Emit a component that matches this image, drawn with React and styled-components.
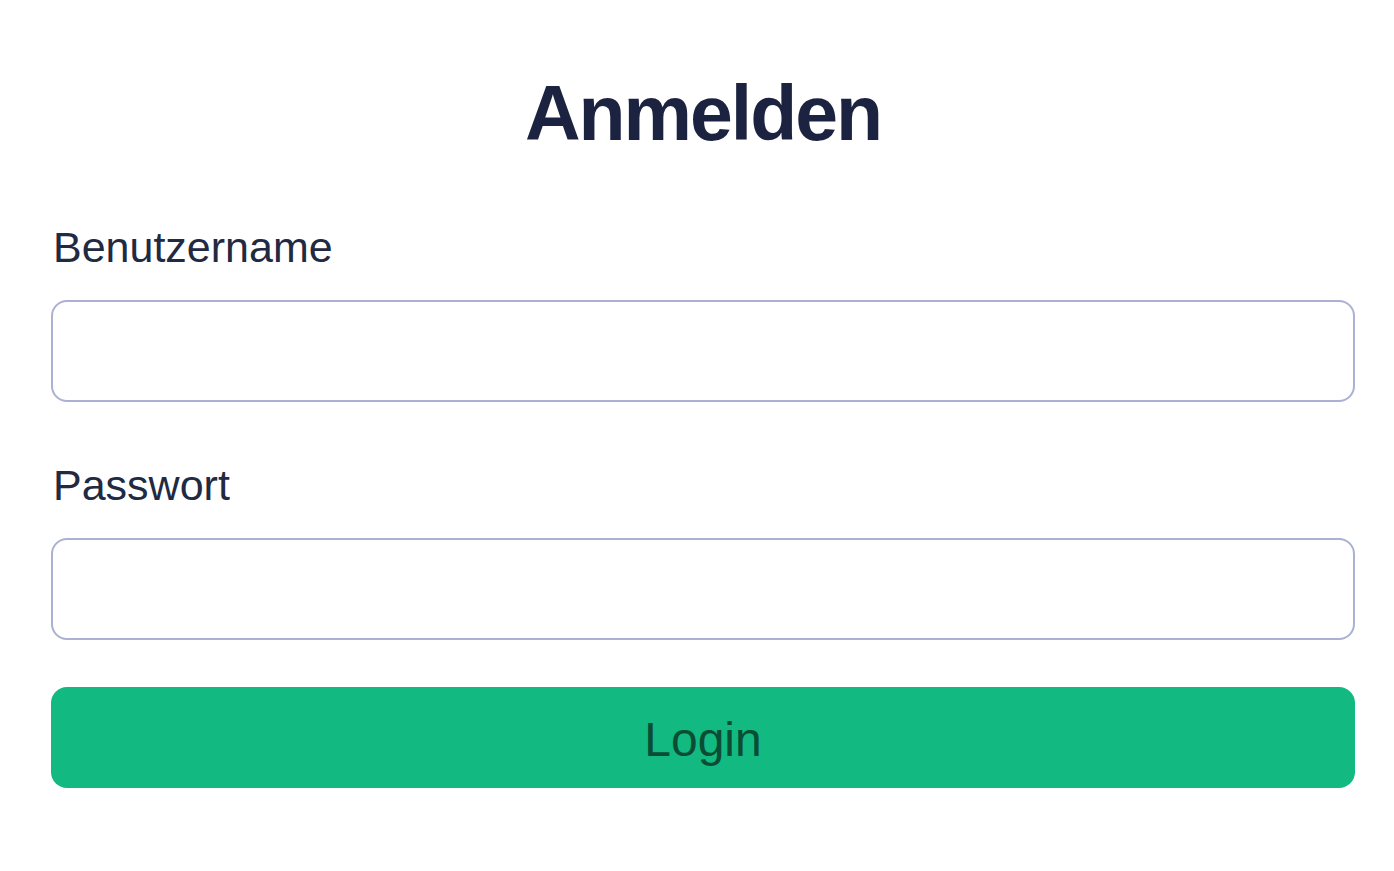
import styled, { createGlobalStyle } from "styled-components";

const GlobalStyle = createGlobalStyle`
  html, body {
    margin: 0;
    padding: 0;
    background: #ffffff;
    font-family: "Liberation Sans", Arial, sans-serif;
  }
`;

const Wrapper = styled.div`
  padding: 65px 39px 0 51px;
  display: flex;
  flex-direction: column;
`;

const Title = styled.h1`
  margin: 0 0 53px;
  font-size: 77px;
  line-height: 96px;
  font-weight: 700;
  text-align: center;
  color: #1c2340;
  letter-spacing: -2px;
`;

const Field = styled.div`
  display: flex;
  flex-direction: column;
  margin-bottom: ${(p) => p.gap || 0}px;
`;

const Label = styled.label`
  font-size: 43px;
  line-height: 66px;
  color: #222a42;
  margin-bottom: 20px;
  padding-left: 2px;
`;

const Input = styled.input`
  box-sizing: border-box;
  width: 100%;
  height: 102px;
  border: 2px solid #aab1d2;
  border-radius: 16px;
  background: #fff;
  font-size: 40px;
  padding: 0 24px;
  outline: none;
`;

const Button = styled.button`
  height: 101px;
  padding-top: 4px;
  border: none;
  border-radius: 16px;
  background: #12b981;
  color: #0a4d34;
  font-family: "Liberation Sans", Arial, sans-serif;
  font-size: 48px;
  cursor: pointer;
`;

const App = () => {
  return (
    <Wrapper>
      <GlobalStyle />
      <Title>Anmelden</Title>
      <Field gap={50}>
        <Label>Benutzername</Label>
        <Input type="text" />
      </Field>
      <Field gap={47}>
        <Label>Passwort</Label>
        <Input type="password" />
      </Field>
      <Button>Login</Button>
    </Wrapper>
  );
};

export default App;
